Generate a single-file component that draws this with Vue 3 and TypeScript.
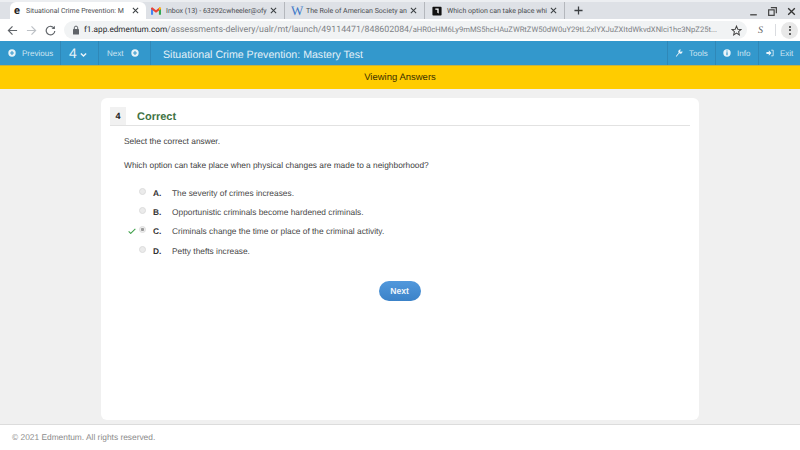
<script setup lang="ts">
const tabs = [
  { title: 'Situational Crime Prevention: M', icon: 'e', active: true },
  { title: 'Inbox (13) - 63292cwheeler@ofy', icon: 'm', active: false },
  { title: 'The Role of American Society an', icon: 'w', active: false },
  { title: 'Which option can take place whi', icon: 'b', active: false },
]

const options = [
  { key: 'A.', text: 'The severity of crimes increases.', picked: false },
  { key: 'B.', text: 'Opportunistic criminals become hardened criminals.', picked: false },
  { key: 'C.', text: 'Criminals change the time or place of the criminal activity.', picked: true },
  { key: 'D.', text: 'Petty thefts increase.', picked: false },
]
</script>

<template>
  <div class="page">
    <div class="tabstrip">
      <div v-for="tab in tabs" :key="tab.icon" class="tab" :class="['tab-' + tab.icon, { active: tab.active }]">
        <span v-if="tab.icon === 'e'" class="fav fav-e">e</span>
        <svg v-else-if="tab.icon === 'm'" class="fav" viewBox="0 0 12 10">
          <path d="M0 1.5 L0 9.5 L2.5 9.5 L2.5 4 Z" fill="#4285f4" />
          <path d="M12 1.5 L12 9.5 L9.5 9.5 L9.5 4 Z" fill="#34a853" />
          <path d="M0 1.5 L1.5 .5 L6 4 L10.5 .5 L12 1.5 L12 2.5 L6 7 L0 2.5 Z" fill="#ea4335" />
          <path d="M10.5 .5 L12 1.5 L12 2.5 L9.5 4.4 L9.5 1.3 Z" fill="#fbbc04" />
        </svg>
        <span v-else-if="tab.icon === 'w'" class="fav fav-w">W</span>
        <svg v-else class="fav" viewBox="0 0 12 12">
          <rect x="0.5" y="1" width="11" height="10.5" rx="1" fill="#111" />
          <path d="M4 3 H8 V9 L6.4 8 V4.4 H4 Z" fill="#fff" />
        </svg>
        <span class="tab-title">{{ tab.title }}</span>
        <svg class="tab-close" viewBox="0 0 8 8">
          <path d="M1 1 L7 7 M7 1 L1 7" stroke="#3c4043" stroke-width="1.2" />
        </svg>
      </div>
      <svg class="new-tab" viewBox="0 0 10 10">
        <path d="M5 .5 V9.5 M.5 5 H9.5" stroke="#3c4043" stroke-width="1.4" />
      </svg>
      <div class="win-controls">
        <svg viewBox="0 0 10 10"><path d="M2 8 H8" stroke="#444" stroke-width="1.2" /></svg>
        <svg viewBox="0 0 10 10">
          <rect x="1.5" y="3.5" width="5" height="5" fill="none" stroke="#444" stroke-width="1.1" />
          <path d="M3.5 1.5 H8.5 V6.5" fill="none" stroke="#444" stroke-width="1.1" />
        </svg>
        <svg viewBox="0 0 10 10"><path d="M2 2 L8 8 M8 2 L2 8" stroke="#333" stroke-width="1.2" /></svg>
      </div>
    </div>

    <div class="toolbar">
      <svg class="nav-icon" viewBox="0 0 12 12">
        <path d="M11 6 H2 M6 1.5 L1.5 6 L6 10.5" fill="none" stroke="#5f6368" stroke-width="1.3" />
      </svg>
      <svg class="nav-icon" viewBox="0 0 12 12">
        <path d="M1 6 H10 M6 1.5 L10.5 6 L6 10.5" fill="none" stroke="#bdc1c6" stroke-width="1.3" />
      </svg>
      <svg class="nav-icon" viewBox="0 0 12 12">
        <path d="M10 3.6 A4.7 4.7 0 1 0 10.7 6.5" fill="none" stroke="#5f6368" stroke-width="1.3" />
        <path d="M10.8 .8 V4.4 H7.2 Z" fill="#5f6368" />
      </svg>
      <div class="omnibox">
        <svg class="lock" viewBox="0 0 8 10">
          <rect x="1" y="4" width="6" height="5.5" rx=".6" fill="#5f6368" />
          <path d="M2.3 4 V2.8 A1.7 1.7 0 0 1 5.7 2.8 V4" fill="none" stroke="#5f6368" />
        </svg>
        <span class="url"><span class="host">f1.app.edmentum.com</span>/assessments-delivery/ualr/mt/launch/49114471/848602084/<span class="url-tail">aHR0cHM6Ly9mMS5hcHAuZWRtZW50dW0uY29tL2xlYXJuZXItdWkvdXNlci1hc3NpZ25t...</span></span>
        <svg class="star" viewBox="0 0 12 12">
          <path d="M6 1.2 L7.4 4.6 L11 4.9 L8.3 7.2 L9.1 10.8 L6 8.9 L2.9 10.8 L3.7 7.2 L1 4.9 L4.6 4.6 Z" fill="none" stroke="#444" stroke-width="1.1" />
        </svg>
      </div>
      <span class="ext">S</span>
      <span class="tool-sep"></span>
      <div class="menu-btn"><i></i><i></i><i></i></div>
    </div>

    <header class="appbar">
      <div class="seg seg-prev">
        <svg class="circ" viewBox="0 0 10 10">
          <circle cx="5" cy="5" r="4.6" fill="#e6f2f8" />
          <path d="M5 2.6 V7.4 M2.6 5 H7.4" stroke="#3597cb" stroke-width="1.3" />
        </svg>
        <span>Previous</span>
      </div>
      <div class="seg seg-num">
        <span class="num">4</span>
        <svg class="chev" viewBox="0 0 8 6"><path d="M1 1.2 L4 4.2 L7 1.2" fill="none" stroke="#eaf4fa" stroke-width="1.6" /></svg>
      </div>
      <div class="seg seg-next">
        <span>Next</span>
        <svg class="circ" viewBox="0 0 10 10">
          <circle cx="5" cy="5" r="4.6" fill="#e6f2f8" />
          <path d="M5 2.6 V7.4 M2.6 5 H7.4" stroke="#3597cb" stroke-width="1.3" />
        </svg>
      </div>
      <h1 class="test-title">Situational Crime Prevention: Mastery Test</h1>
      <div class="seg seg-tool">
        <svg class="tool-icon" viewBox="0 0 10 10">
          <path d="M1 9 L4.6 4.6 A2.4 2.4 0 0 1 7.6 1 L6.2 2.6 L7.4 3.8 L9 2.4 A2.4 2.4 0 0 1 5.4 5.4 L1.8 9.6 Z" fill="#eaf4fa" />
        </svg>
        <span>Tools</span>
      </div>
      <div class="seg seg-info">
        <svg class="tool-icon" viewBox="0 0 10 10">
          <circle cx="5" cy="5" r="4.6" fill="#eaf4fa" />
          <path d="M5 4.2 V7.8 M5 2 V3.2" stroke="#3597cb" stroke-width="1.5" />
        </svg>
        <span>Info</span>
      </div>
      <div class="seg seg-exit">
        <svg class="tool-icon" viewBox="0 0 10 10">
          <path d="M0.5 3.6 H3.5 V1.6 L6.8 5 L3.5 8.4 V6.4 H0.5 Z" fill="#eaf4fa" />
          <path d="M6.5 1.5 H9 V8.5 H6.5" fill="none" stroke="#eaf4fa" stroke-width="1" />
        </svg>
        <span>Exit</span>
      </div>
    </header>

    <div class="banner">Viewing Answers</div>

    <main class="stage">
      <section class="card">
        <div class="q-head">
          <span class="q-num">4</span>
          <span class="q-status">Correct</span>
        </div>
        <div class="q-body">
          <p class="prompt">Select the correct answer.</p>
          <p class="question">Which option can take place when physical changes are made to a neighborhood?</p>
          <ul class="options">
            <li v-for="opt in options" :key="opt.key" class="option">
              <svg v-if="opt.picked" class="check" viewBox="0 0 10 8">
                <path d="M.8 4.2 L3.4 6.8 L9.2 1" fill="none" stroke="#3fa04a" stroke-width="1.3" />
              </svg>
              <span class="radio" :class="{ picked: opt.picked }"></span>
              <span class="opt-key">{{ opt.key }}</span>
              <span class="opt-text">{{ opt.text }}</span>
            </li>
          </ul>
          <div class="next-row">
            <button type="button" class="next-btn">Next</button>
          </div>
        </div>
      </section>
    </main>

    <footer class="footer">© 2021 Edmentum. All rights reserved.</footer>
  </div>
</template>

<style>
html,
body {
  margin: 0;
  overflow: hidden;
}
</style>

<style scoped>
.page {
  display: flex;
  flex-direction: column;
  width: 800px;
  height: 450px;
  overflow: hidden;
  background: #fff;
  font-family: "Liberation Sans", Arial, sans-serif;
  text-rendering: geometricPrecision;
}

.tabstrip {
  display: flex;
  flex: none;
  align-items: flex-end;
  height: 19px;
  padding: 0 0 0 10px;
  box-sizing: border-box;
  background: #dee1e6;
  border-top: 2px solid #eceef1;
}

.tab {
  display: flex;
  flex: none;
  align-items: center;
  width: 140px;
  height: 17px;
  padding: 0 7px 0 6px;
  box-sizing: border-box;
  font-family: Roboto, "Liberation Sans", sans-serif;
  font-size: 7px;
  color: #4a4d51;
  border-right: 1px solid #b4b7bc;
}

.tab-e {
  width: 136px;
  padding-left: 3px;
}

.tab-m {
  width: 139px;
  padding-left: 5px;
}

.tab-b {
  padding-left: 7px;
}

.tab.active {
  background: #fff;
  border-right: none;
  border-radius: 6px 6px 0 0;
}

.fav {
  flex: none;
  width: 10px;
  height: 10px;
  margin-right: 5px;
}

.fav-e {
  width: 8px;
  font-size: 11px;
  line-height: 10px;
  font-weight: 700;
  text-align: center;
  color: #222;
}

.fav-w {
  font-family: "Liberation Serif", serif;
  font-size: 13px;
  line-height: 10px;
  color: #3b78c8;
  text-align: center;
}

.tab-title {
  flex: 1;
  min-width: 0;
  white-space: nowrap;
}

.tab-close {
  flex: none;
  width: 7px;
  height: 7px;
  margin-left: 3px;
}

.new-tab {
  flex: none;
  width: 9px;
  height: 9px;
  margin: 0 0 4px 9px;
}

.win-controls {
  display: flex;
  gap: 8px;
  margin-left: auto;
  margin-right: 3px;
  margin-bottom: 2px;
}

.win-controls svg {
  width: 11px;
  height: 11px;
}

.toolbar {
  display: flex;
  flex: none;
  align-items: center;
  height: 22px;
  padding: 0 3px 0 7px;
  background: #fff;
  box-sizing: border-box;
}

.nav-icon {
  flex: none;
  width: 11px;
  height: 11px;
  margin-right: 8px;
}

.omnibox {
  display: flex;
  align-items: center;
  flex: none;
  width: 683px;
  height: 18px;
  padding: 0 5px 0 8px;
  box-sizing: border-box;
  border-radius: 9px;
  background: #f1f3f4;
}

.lock {
  flex: none;
  width: 8px;
  height: 10px;
  margin-right: 4px;
}

.url {
  flex: 1;
  min-width: 0;
  overflow: hidden;
  white-space: nowrap;
  font-family: Roboto, "Liberation Sans", sans-serif;
  font-size: 8.8px;
  color: #7d8185;
}

.host {
  font-size: 8.2px;
  color: #26282b;
}

.url-tail {
  font-size: 7.65px;
}

.star {
  flex: none;
  width: 11px;
  height: 11px;
  margin-left: 6px;
}

.ext {
  flex: none;
  margin-left: 11px;
  width: 10px;
  font-family: "Liberation Serif", serif;
  font-style: italic;
  font-size: 10px;
  color: #666;
}

.tool-sep {
  flex: none;
  width: 1px;
  height: 12px;
  margin-left: 7px;
  background: #dadce0;
}

.menu-btn {
  display: flex;
  flex: none;
  flex-direction: column;
  align-items: center;
  justify-content: center;
  gap: 1.5px;
  width: 17px;
  height: 17px;
  margin-left: 5px;
  border-radius: 50%;
  background: #e8e8e8;
}

.menu-btn i {
  width: 2px;
  height: 2px;
  border-radius: 50%;
  background: #333;
}

.appbar {
  display: flex;
  align-items: stretch;
  height: 24px;
  flex: none;
  background: #3398cc;
  color: #cfe6f2;
  font-size: 8px;
}

.seg {
  display: flex;
  align-items: center;
  border-right: 1px solid #2f88b8;
  box-sizing: border-box;
}

.seg-prev {
  width: 61px;
  padding-left: 8px;
  gap: 6px;
}

.seg-num {
  width: 38px;
  padding-left: 8px;
  gap: 3px;
}

.num {
  font-size: 14px;
  color: #e8f3f9;
}

.chev {
  width: 7px;
  height: 6px;
  margin-top: 3px;
}

.seg-next {
  width: 52px;
  padding-left: 8px;
  gap: 8px;
}

.circ {
  width: 8px;
  height: 8px;
}

.test-title {
  flex: 1;
  margin: 0;
  padding-left: 12px;
  font-size: 10.6px;
  font-weight: 400;
  line-height: 28px;
  color: #e3f1f8;
  white-space: nowrap;
}

.seg-tool,
.seg-info,
.seg-exit {
  border-right: none;
  border-left: 1px solid #2f88b8;
  gap: 6px;
  padding-left: 7px;
}

.seg-tool {
  width: 48px;
}

.seg-info {
  width: 43px;
}

.seg-exit {
  width: 42px;
}

.tool-icon {
  flex: none;
  width: 8px;
  height: 8px;
}

.banner {
  flex: none;
  height: 24px;
  line-height: 24px;
  text-align: center;
  font-size: 9.5px;
  color: #3d3000;
  background: #ffcc00;
  border-top: 1px solid #c8b23c;
  box-sizing: border-box;
}

.stage {
  flex: none;
  height: 336px;
  box-sizing: border-box;
  padding: 9px 101px 0;
  background: #f0f0f0;
  border-bottom: 1px solid #dcdcdc;
}

.card {
  height: 322px;
  box-sizing: border-box;
  padding: 9px 9px 0;
  background: #fff;
  border-radius: 6px;
}

.q-head {
  display: flex;
  align-items: center;
  height: 18px;
  border-bottom: 1px solid #e2e2e2;
}

.q-num {
  width: 16px;
  height: 18px;
  line-height: 19px;
  text-align: center;
  font-size: 9px;
  font-weight: 700;
  color: #222;
  background: #f1f1f1;
}

.q-status {
  margin-left: 11px;
  padding-top: 1px;
  font-size: 11px;
  font-weight: 700;
  color: #3f7344;
}

.q-body {
  padding: 0 15px 0 14px;
  font-size: 8.35px;
  color: #444;
}

.prompt {
  margin: 9px 0 0;
  line-height: 12px;
}

.question {
  margin: 12px 0 0;
  line-height: 12px;
}

.options {
  list-style: none;
  margin: 12px 0 0;
  padding: 0;
}

.option {
  position: relative;
  display: flex;
  align-items: center;
  height: 19.4px;
  padding-left: 15px;
}

.check {
  position: absolute;
  left: 4px;
  top: 6px;
  width: 8px;
  height: 6.4px;
}

.radio {
  flex: none;
  width: 7px;
  height: 7px;
  margin-top: -3px;
  box-sizing: border-box;
  border-radius: 50%;
  background: #ebebeb;
  border: 1px solid #dcdcdc;
}

.radio.picked {
  background: radial-gradient(circle, #999 0 1.3px, #eee 1.9px);
}

.opt-key {
  width: 19px;
  margin-left: 7px;
  font-weight: 700;
  color: #333;
}

.opt-text {
  color: #4a4a4a;
}

.next-row {
  display: flex;
  justify-content: center;
  padding-top: 20px;
}

.next-btn {
  width: 42px;
  height: 20px;
  padding: 0;
  border: none;
  border-radius: 11px;
  background: linear-gradient(180deg, #5198dc, #3b82c8);
  color: #eef5fb;
  font-family: inherit;
  font-size: 8.6px;
  font-weight: 700;
}

.footer {
  flex: 1;
  padding: 7px 0 0 12px;
  font-size: 8.37px;
  color: #8b8b8b;
  background: #fff;
}
</style>
